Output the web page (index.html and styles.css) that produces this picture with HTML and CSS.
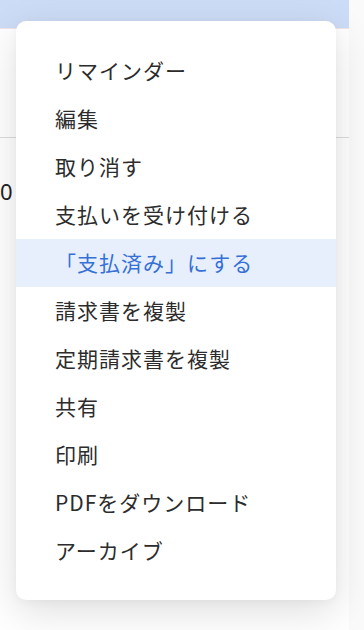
FILE: index.html
```html
<!DOCTYPE html>
<html lang="ja">
<head>
<meta charset="utf-8">
<link rel="stylesheet" href="styles.css">
</head>
<body>
<div class="page">
  <div class="topbar"></div>
  <div class="section"></div>
  <div class="amount-row"><span class="amount">0</span></div>
</div>
<ul class="menu">
  <li class="item">リマインダー</li>
  <li class="item">編集</li>
  <li class="item">取り消す</li>
  <li class="item">支払いを受け付ける</li>
  <li class="item active">「支払済み」にする</li>
  <li class="item">請求書を複製</li>
  <li class="item">定期請求書を複製</li>
  <li class="item">共有</li>
  <li class="item">印刷</li>
  <li class="item">PDFをダウンロード</li>
  <li class="item">アーカイブ</li>
</ul>
</body>
</html>
```

FILE: styles.css
```css
html, body {
  margin: 0;
  padding: 0;
}
body {
  width: 364px;
  height: 630px;
  overflow: hidden;
  background: #fafafa;
  font-family: "Noto Sans CJK JP", "Noto Sans", sans-serif;
  color: #222;
  position: relative;
}
.page {
  width: 349px;
  height: 630px;
  background: #fff;
}
.topbar {
  height: 28px;
  background: #cddcf6;
  border-bottom: 1px solid #f1e4e6;
}
.section {
  height: 108px;
  border-bottom: 1px solid #dcdcdc;
}
.amount-row {
  height: 64px;
  display: flex;
  align-items: flex-end;
}
.amount {
  font-family: "Noto Sans", sans-serif;
  font-size: 22px;
  line-height: 22px;
  color: #222;
}
.menu {
  position: absolute;
  left: 16px;
  top: 21px;
  width: 320px;
  margin: 0;
  padding: 26px 0 25px;
  list-style: none;
  background: #fff;
  border-radius: 10px;
  box-shadow: 0 12px 40px rgba(0, 0, 0, 0.13), 0 2px 8px rgba(0, 0, 0, 0.04);
}
.item {
  box-sizing: border-box;
  height: 48px;
  display: flex;
  align-items: center;
  padding-left: 39px;
  padding-bottom: 3px;
  font-size: 21px;
  letter-spacing: 1px;
  color: #2c2c2c;
}
.item.active {
  background: #e7effc;
  color: #3670d6;
}
```
